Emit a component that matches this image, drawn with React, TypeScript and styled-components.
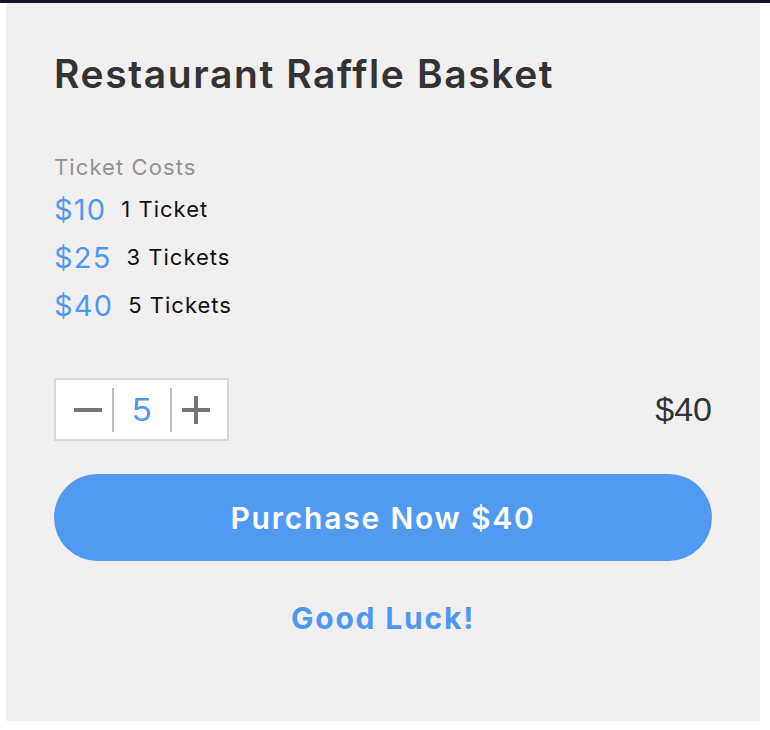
import { ReactElement, useState } from "react";
import styled, { createGlobalStyle } from "styled-components";

const blue = "#4f98f2";
const font = "Inter, 'Open Sans', sans-serif";

const GlobalStyle = createGlobalStyle`
  html, body {
    margin: 0;
    padding: 0;
    background: #ffffff;
  }
  body {
    border-top: 3px solid #16122f;
  }
`;

const prices = [
  { cost: 10, label: "1 Ticket" },
  { cost: 25, label: "3 Tickets" },
  { cost: 40, label: "5 Tickets" },
];

export default function App(): ReactElement {
  const [count, setCount] = useState<number>(5);
  const total = 40;

  return (
    <>
      <GlobalStyle />
      <StyledPanel>
        <StyledTitle>Restaurant Raffle Basket</StyledTitle>
        <StyledCostsLabel>Ticket Costs</StyledCostsLabel>
        <StyledPriceList>
          {prices.map((p) => (
            <StyledPriceRow key={p.cost}>
              <StyledPrice>${p.cost}</StyledPrice>
              <StyledTickets>{p.label}</StyledTickets>
            </StyledPriceRow>
          ))}
        </StyledPriceList>
        <StyledQtyRow>
          <StyledStepper>
            <StyledStepButton side="left" onClick={() => setCount((c) => Math.max(1, c - 1))}>
              <svg width="28" height="28" viewBox="0 0 28 28">
                <rect x="0" y="12" width="28" height="4" fill="#767676" />
              </svg>
            </StyledStepButton>
            <StyledDivider />
            <StyledCount>{count}</StyledCount>
            <StyledDivider />
            <StyledStepButton side="right" onClick={() => setCount((c) => c + 1)}>
              <svg width="28" height="28" viewBox="0 0 28 28">
                <rect x="0" y="12" width="28" height="4" fill="#767676" />
                <rect x="12" y="0" width="4" height="28" fill="#767676" />
              </svg>
            </StyledStepButton>
          </StyledStepper>
          <StyledTotal>${total}</StyledTotal>
        </StyledQtyRow>
        <StyledPurchase>Purchase Now ${total}</StyledPurchase>
        <StyledLuck>Good Luck!</StyledLuck>
      </StyledPanel>
    </>
  );
}

const StyledPanel = styled.div`
  margin: 0 10px 9px 6px;
  background: #f1eff0;
  padding: 47px 48px 83px 48px;
  display: flex;
  flex-direction: column;
  font-family: ${font};
`;

const StyledTitle = styled.h1`
  margin: 0;
  font-size: 39px;
  line-height: 48px;
  font-weight: 600;
  letter-spacing: 1.6px;
  color: #333333;
`;

const StyledCostsLabel = styled.div`
  margin-top: 55px;
  font-size: 22px;
  line-height: 28px;
  letter-spacing: 1.1px;
  color: #939393;
`;

const StyledPriceList = styled.div`
  margin-top: 8px;
  display: flex;
  flex-direction: column;
  gap: 8px;
`;

const StyledPriceRow = styled.div`
  display: flex;
  align-items: center;
  gap: 15px;
  height: 40px;
`;

const StyledPrice = styled.span`
  font-size: 29px;
  letter-spacing: 1.2px;
  color: ${blue};
`;

const StyledTickets = styled.span`
  font-size: 22px;
  letter-spacing: 1px;
  color: #111111;
`;

const StyledQtyRow = styled.div`
  margin-top: 53px;
  display: flex;
  align-items: center;
  justify-content: space-between;
`;

const StyledStepper = styled.div`
  display: flex;
  align-items: center;
  width: 175px;
  height: 63px;
  box-sizing: border-box;
  border: 2px solid #d7d7d7;
  background: #ffffff;
`;

const StyledStepButton = styled.button<{ side: "left" | "right" }>`
  width: ${({ side }) => (side === "left" ? "56px" : "55px")};
  box-sizing: border-box;
  height: 100%;
  border: none;
  background: none;
  padding: ${({ side }) => (side === "left" ? "0 0 0 8px" : "0 7px 0 0")};
  display: flex;
  align-items: center;
  justify-content: center;
  cursor: pointer;
`;

const StyledDivider = styled.div`
  width: 2px;
  height: 44px;
  background: #bdbdbd;
`;

const StyledCount = styled.div`
  width: 56px;
  text-align: center;
  font-family: "Liberation Sans", Arial, sans-serif;
  font-size: 34px;
  color: ${blue};
`;

const StyledTotal = styled.div`
  font-family: "Liberation Sans", Arial, sans-serif;
  font-size: 34px;
  color: #333333;
`;

const StyledPurchase = styled.button`
  margin-top: 33px;
  height: 87px;
  border: none;
  border-radius: 44px;
  background: #519af2;
  color: #ffffff;
  font-family: ${font};
  font-size: 30px;
  font-weight: 600;
  letter-spacing: 1.8px;
  cursor: pointer;
`;

const StyledLuck = styled.div`
  margin-top: 37px;
  text-align: center;
  font-size: 30px;
  line-height: 40px;
  font-weight: 700;
  letter-spacing: 1.8px;
  color: ${blue};
`;
